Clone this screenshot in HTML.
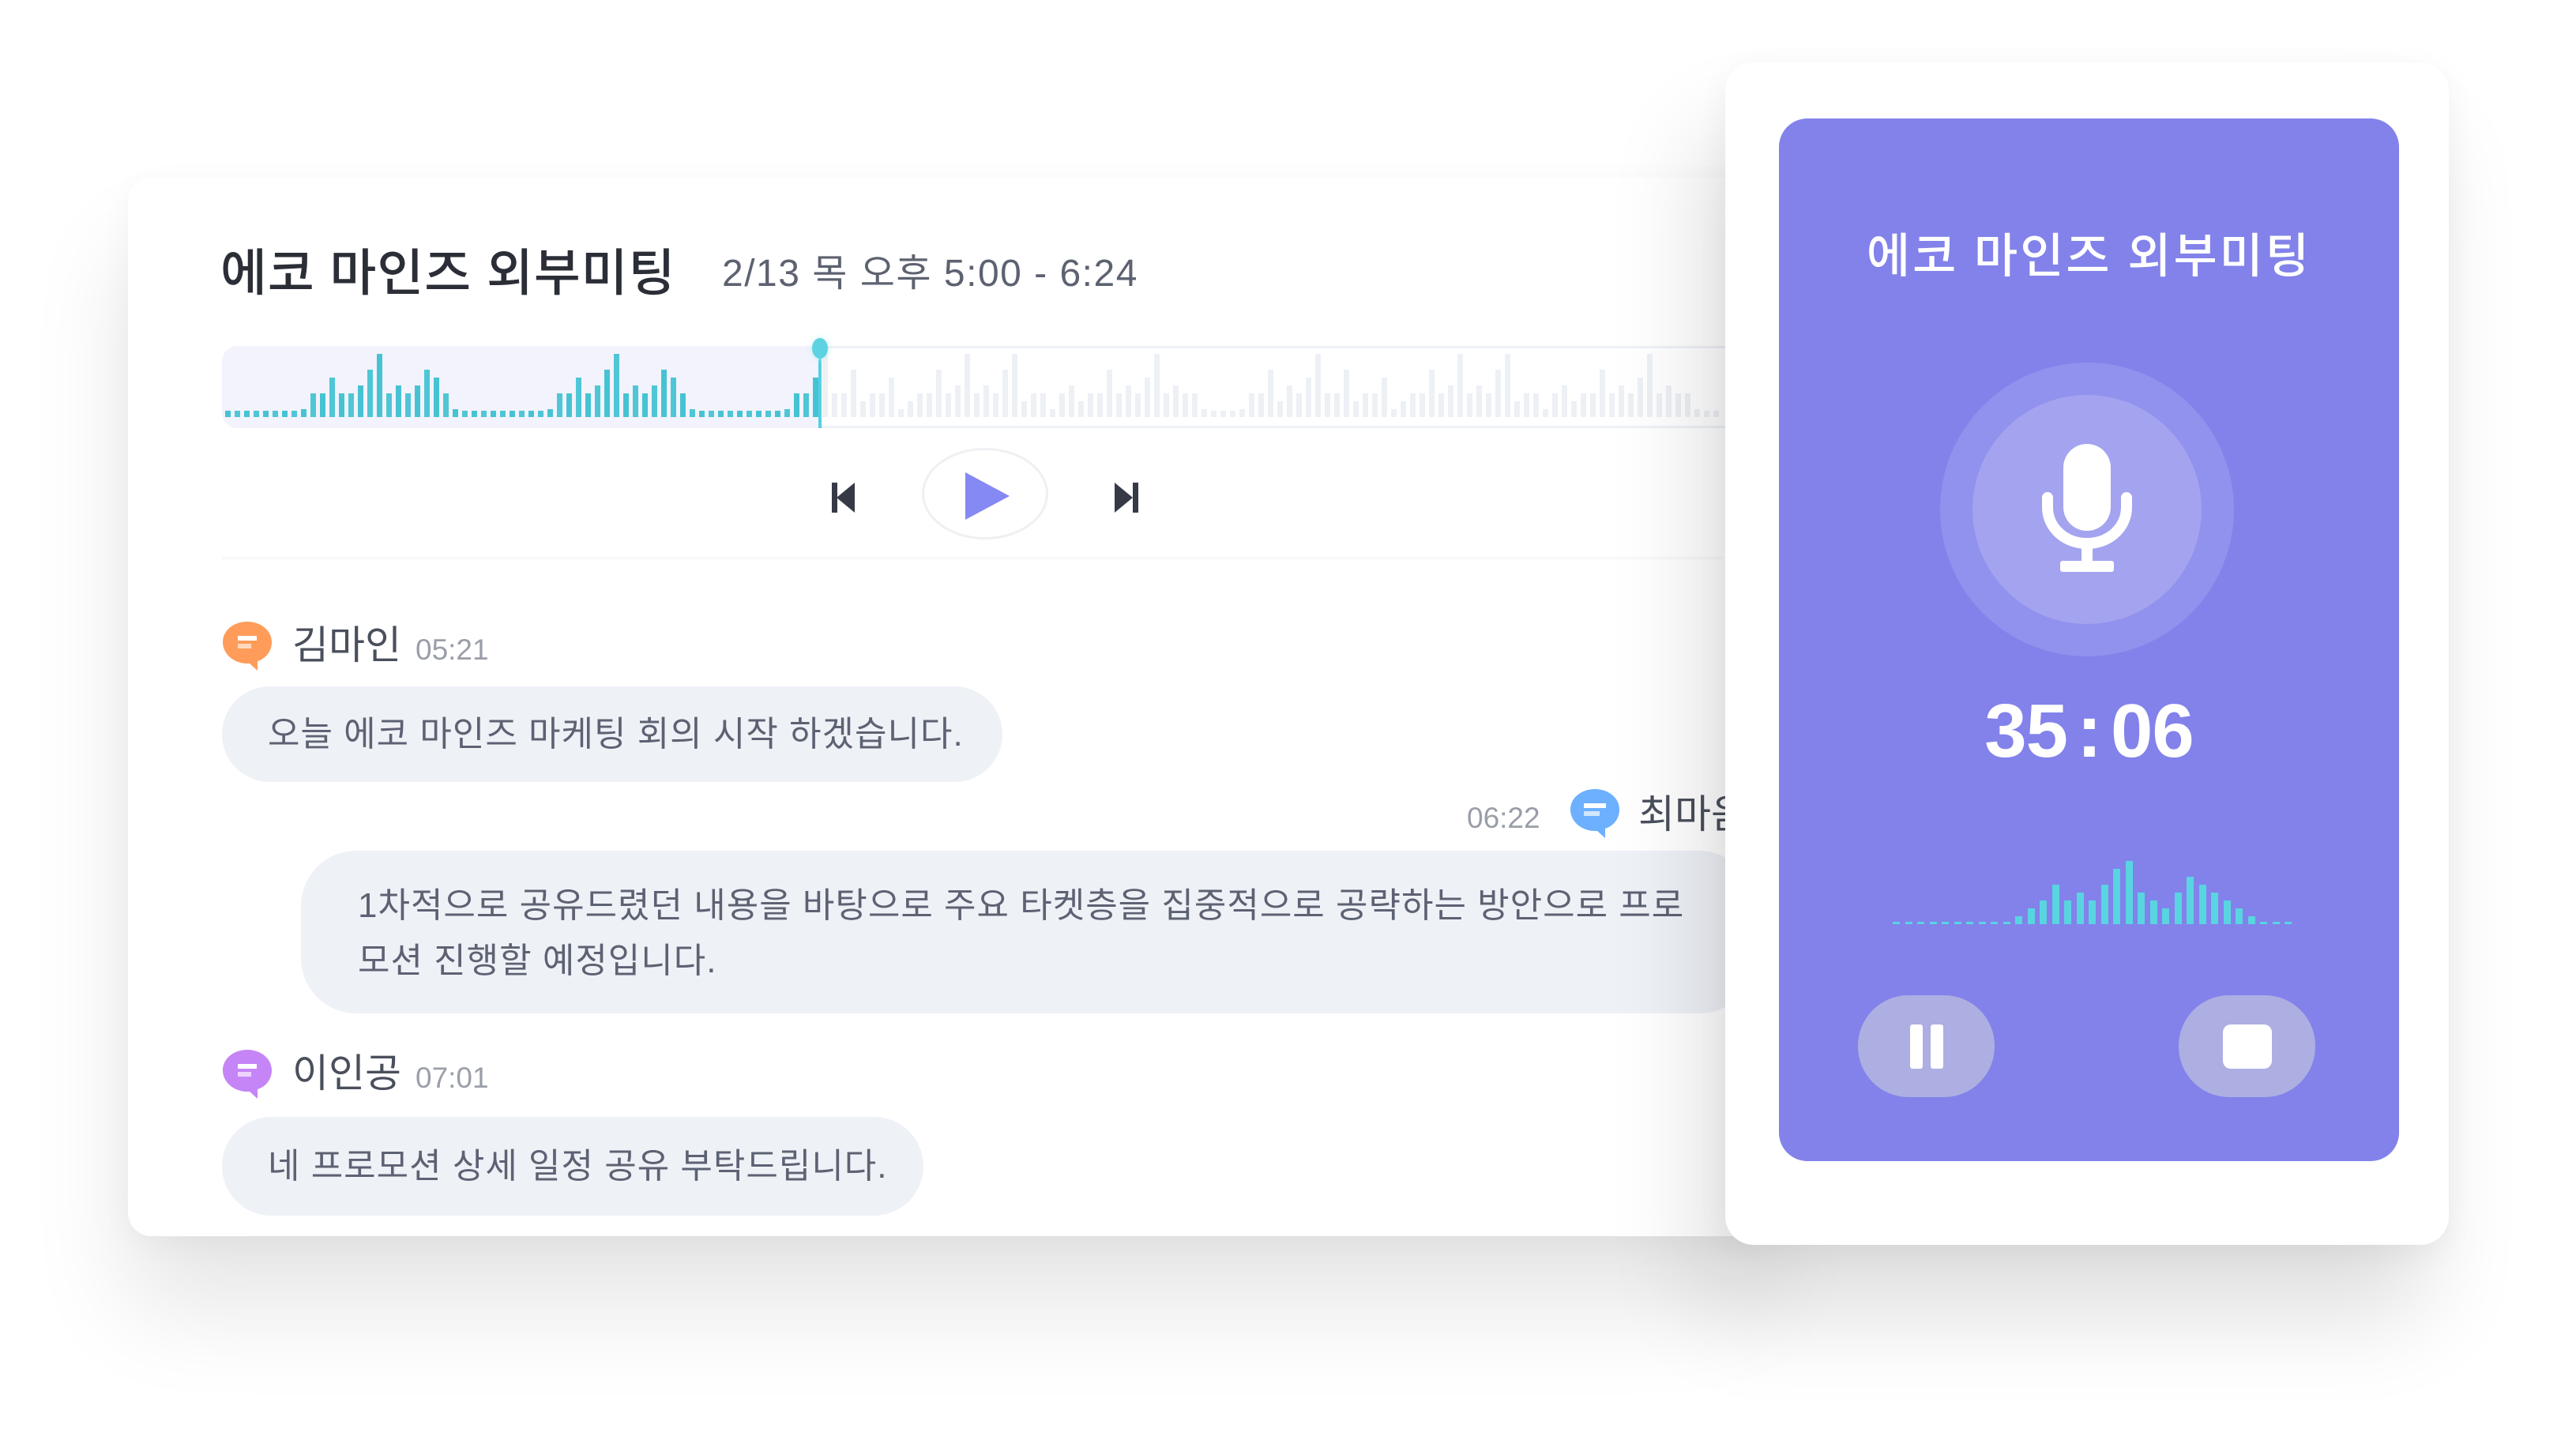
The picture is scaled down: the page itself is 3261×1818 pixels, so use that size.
<!DOCTYPE html>
<html><head><meta charset="utf-8">
<style>
*{margin:0;padding:0;box-sizing:border-box}
body{width:3261px;height:1818px;background:#fff;position:relative;overflow:hidden;font-family:"Liberation Sans","Noto Sans CJK KR",sans-serif}
.abs{position:absolute}
#left{left:162px;top:225px;width:2060px;height:1340px;background:#fff;border-radius:30px;box-shadow:0 90px 130px rgba(0,0,0,0.10),0 10px 40px rgba(0,0,0,0.04)}
#right{left:2184px;top:79px;width:916px;height:1497px;background:#fff;border-radius:36px;box-shadow:-30px 90px 120px rgba(0,0,0,0.13),0 10px 40px rgba(0,0,0,0.05)}
#purple{left:2252px;top:150px;width:785px;height:1320px;background:#8282ea;border-radius:36px}
.t{white-space:nowrap;line-height:1}
.bub{background:#eef1f6;border-radius:70px;color:#5d6273;font-size:44px}
.name{font-size:50px;color:#4a4f5c}
.time{font-size:37px;color:#9a9ea8}
</style></head><body>
<div id="left" class="abs"></div>
<div class="abs t" style="left:279px;top:314px;font-size:64px;color:#2b2e36;font-weight:500;letter-spacing:1px">에코 마인즈 외부미팅</div>
<div class="abs t" style="left:914px;top:323px;font-size:48px;color:#5d6270;letter-spacing:1.5px">2/13 목 오후 5:00 - 6:24</div>

<div class="abs" style="left:281px;top:438px;width:1920px;height:104px;border:3px solid #eef1f6;border-radius:20px 0 0 20px;border-right:none"></div>
<div class="abs" style="left:281px;top:438px;width:757px;height:104px;background:#f2f3fc;border-radius:20px 0 0 20px"></div>
<div id="wave" class="abs" style="left:285px;top:450px;width:1900px;height:82px"></div>
<div class="abs" style="left:1036px;top:440px;width:4px;height:102px;background:#55d0df"></div>
<div class="abs" style="left:1028px;top:428px;width:20px;height:26px;border-radius:50%;background:#5dd3e2;box-shadow:0 0 8px #bdeff5"></div>

<svg class="abs" style="left:1053px;top:611px" width="30" height="38" viewBox="0 0 30 38"><rect x="0" y="0" width="7" height="38" fill="#363a46"/><path d="M29 0V38L6 19Z" fill="#363a46"/></svg>
<div class="abs" style="left:1167px;top:567px;width:160px;height:116px;border:3px solid #eff0f3;border-radius:50%"></div>
<svg class="abs" style="left:1222px;top:598px" width="58" height="60" viewBox="0 0 58 60"><path d="M0 0L56 30L0 60Z" fill="#8589f3"/></svg>
<svg class="abs" style="left:1411px;top:611px" width="30" height="38" viewBox="0 0 30 38"><path d="M0 0V38L23 19Z" fill="#363a46"/><rect x="23" y="0" width="7" height="38" fill="#363a46"/></svg>
<div class="abs" style="left:281px;top:705px;width:1900px;height:3px;background:#f7f8fb"></div>

<svg class="abs" style="left:280px;top:785px" width="66" height="66" viewBox="0 0 66 66"><path d="M33 2C50 2 64 13 64 28C64 40 56 49 46 52L46 64L36 55C34 55 33 55 33 55C16 55 2 43 2 28C2 13 16 2 33 2Z" fill="#ff9c5a"/><rect x="21" y="20" width="24" height="6" fill="#fff"/><rect x="21" y="30" width="17" height="6" fill="#ffd9bd"/></svg>
<div class="abs t name" style="left:370px;top:792px">김마인</div>
<div class="abs t time" style="left:526px;top:804px">05:21</div>
<div class="abs bub" style="left:281px;top:869px;width:988px;height:121px"></div>
<div class="abs t" style="left:339px;top:908px;font-size:44px;color:#5d6273;letter-spacing:1px">오늘 에코 마인즈 마케팅 회의 시작 하겠습니다.</div>

<div class="abs t time" style="left:1857px;top:1017px">06:22</div>
<svg class="abs" style="left:1986px;top:997px" width="66" height="66" viewBox="0 0 66 66"><path d="M33 2C50 2 64 13 64 28C64 40 56 49 46 52L46 64L36 55C34 55 33 55 33 55C16 55 2 43 2 28C2 13 16 2 33 2Z" fill="#6cb0ff"/><rect x="19" y="20" width="28" height="6" fill="#fff"/><rect x="19" y="30" width="20" height="6" fill="#d2e6ff"/></svg>
<div class="abs t name" style="left:2074px;top:1006px">최마음</div>
<div class="abs bub" style="left:381px;top:1077px;width:1840px;height:206px"></div>
<div class="abs" style="left:453px;top:1112px;font-size:44px;color:#5d6273;line-height:70px;width:1740px;letter-spacing:1px">1차적으로 공유드렸던 내용을 바탕으로 주요 타켓층을 집중적으로 공략하는 방안으로 프로<br>모션 진행할 예정입니다.</div>

<svg class="abs" style="left:280px;top:1327px" width="66" height="66" viewBox="0 0 66 66"><path d="M33 2C50 2 64 13 64 28C64 40 56 49 46 52L46 64L36 55C34 55 33 55 33 55C16 55 2 43 2 28C2 13 16 2 33 2Z" fill="#c585f6"/><rect x="21" y="20" width="24" height="6" fill="#fff"/><rect x="21" y="30" width="17" height="6" fill="#ecd3ff"/></svg>
<div class="abs t name" style="left:370px;top:1334px">이인공</div>
<div class="abs t time" style="left:526px;top:1346px">07:01</div>
<div class="abs bub" style="left:281px;top:1414px;width:888px;height:125px"></div>
<div class="abs t" style="left:339px;top:1455px;font-size:44px;color:#5d6273;letter-spacing:1px">네 프로모션 상세 일정 공유 부탁드립니다.</div>

<div id="right" class="abs"></div>
<div id="purple" class="abs"></div>
<div class="abs t" style="left:2252px;width:785px;text-align:center;top:295px;font-size:60px;color:#fff;font-weight:500;letter-spacing:3px">에코 마인즈 외부미팅</div>
<div class="abs" style="left:2456px;top:459px;width:372px;height:372px;border-radius:50%;background:#9191ee"></div>
<div class="abs" style="left:2497px;top:500px;width:290px;height:290px;border-radius:50%;background:#a3a3f0"></div>
<svg class="abs" style="left:2582px;top:560px" width="120" height="170" viewBox="0 0 120 170"><rect x="30" y="2" width="60" height="110" rx="30" fill="#fff"/><path d="M10 70V82C10 108 32 128 60 128C88 128 110 108 110 82V70" stroke="#fff" stroke-width="14" fill="none" stroke-linecap="round"/><rect x="53" y="126" width="14" height="30" fill="#fff"/><rect x="26" y="150" width="68" height="14" rx="3" fill="#fff"/></svg>
<div class="abs t" style="left:2252px;width:785px;text-align:center;top:878px;font-size:96px;color:#fff;font-weight:bold;letter-spacing:-1px">35<span style="margin:0 12px">:</span>06</div>
<div id="wave2" class="abs" style="left:2396px;top:1082px;width:500px;height:88px"></div>
<div class="abs" style="left:2352px;top:1260px;width:173px;height:129px;border-radius:64px;background:#adaee2"></div>
<div class="abs" style="left:2418px;top:1297px;width:16px;height:56px;background:#fff;border-radius:3px"></div>
<div class="abs" style="left:2444px;top:1297px;width:16px;height:56px;background:#fff;border-radius:3px"></div>
<div class="abs" style="left:2758px;top:1260px;width:173px;height:129px;border-radius:64px;background:#adaee2"></div>
<div class="abs" style="left:2814px;top:1297px;width:62px;height:56px;background:#fff;border-radius:10px"></div>

<script>
(function(){
var w=document.getElementById('wave'),h='';
var pat=[0,0,0,0,0,0,0,0,1,3,3,5,3,3,4,6,8,3,4,3,4,6,5,3,1,0,0,0,0,0,0,0,0,0,1,3,3,5,3,4,6,8,3,4,3,4,6,5,3,1,0];
var pat2=[1,2,3,3,6,3,4,8,3,4,3,6,8,2,3,3,1,3,4,2,3,3,6,3,4,3,5,8,3,4,3,3,1,0,0,0,1,3,3,6,2,4,3,5,8,3,3,6,2,3,3,5];
for(var i=0;i<158;i++){var x=i*12;var v,c;
 if(x<750){v=pat[i%pat.length];c=i%2?'#4fc6d6':'#46c3d3';}else{v=pat2[(i-63+200)%pat2.length];c='#edf0f5';}
 var ht=v==0?8:v*10;
 h+='<div style="position:absolute;left:'+x+'px;bottom:4px;width:7px;height:'+ht+'px;background:'+c+'"></div>';}
w.innerHTML=h;
var w2=document.getElementById('wave2');h='';
var p3=[0,0,0,0,0,0,0,0,0,0,1,2,3,5,3,4,3,5,7,8,4,3,2,4,6,5,4,3,2,1,0,0,0];
for(var j=0;j<p3.length;j++){var v=p3[j];var ht=v==0?3:v*10;
 h+='<div style="position:absolute;left:'+(j*15.5)+'px;bottom:0;width:9px;height:'+ht+'px;background:#59d4e1"></div>';}
w2.innerHTML=h;
})();
</script>
</body></html>
